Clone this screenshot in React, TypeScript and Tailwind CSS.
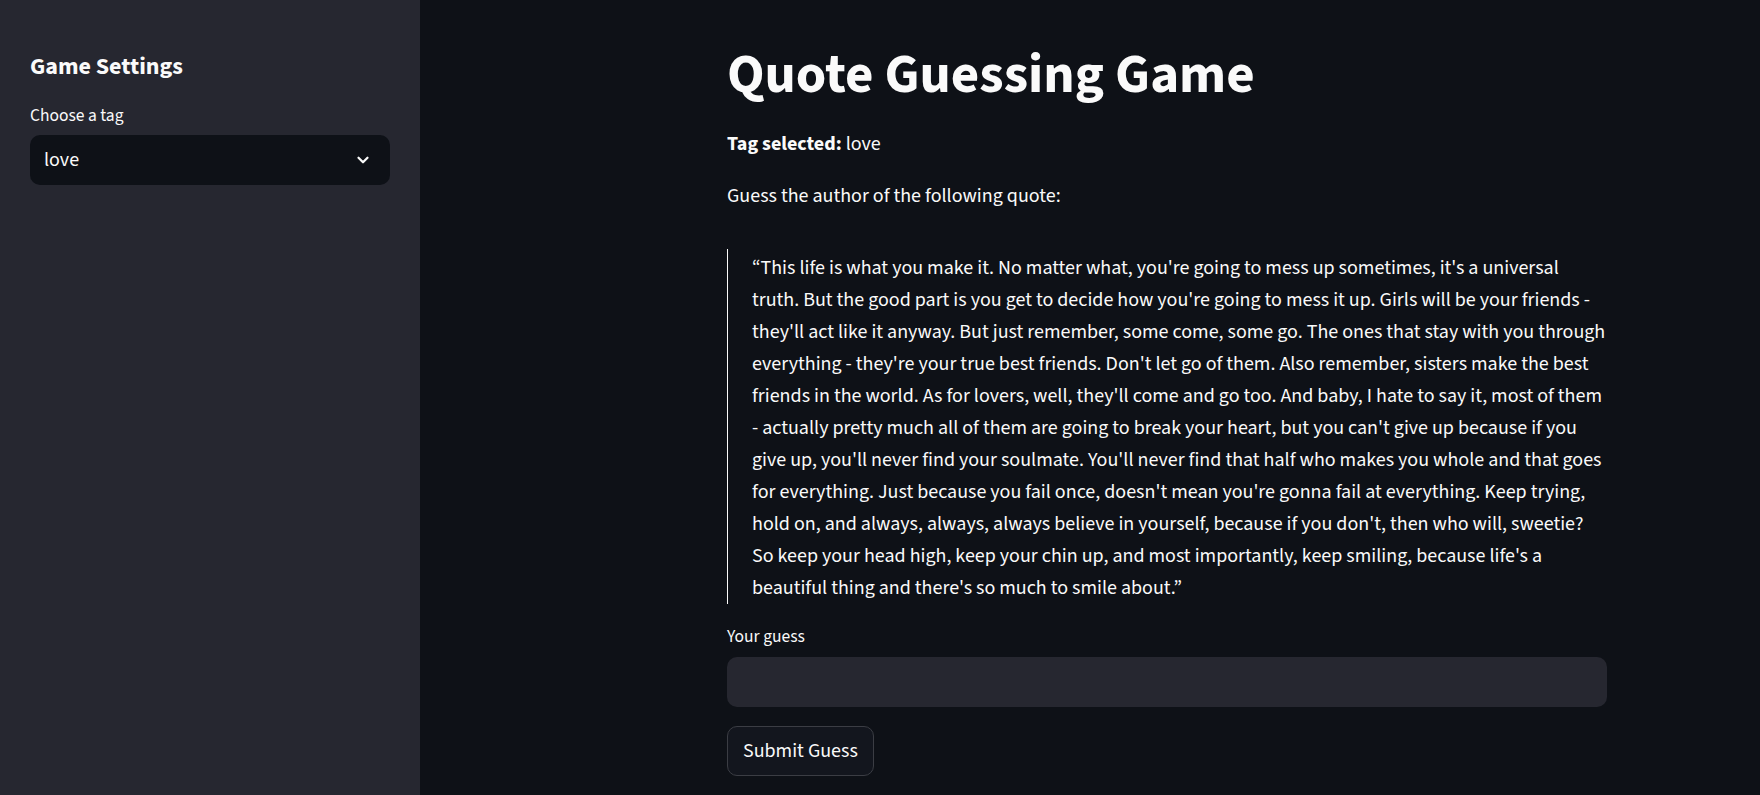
import { ChevronDown } from "lucide-react";

const font = { fontFamily: '"Source Sans Pro", "Source Sans 3", Lato, "Noto Sans", sans-serif' };

const quoteLines = [
  "“This life is what you make it. No matter what, you're going to mess up sometimes, it's a universal",
  "truth. But the good part is you get to decide how you're going to mess it up. Girls will be your friends -",
  "they'll act like it anyway. But just remember, some come, some go. The ones that stay with you through",
  "everything - they're your true best friends. Don't let go of them. Also remember, sisters make the best",
  "friends in the world. As for lovers, well, they'll come and go too. And baby, I hate to say it, most of them",
  "- actually pretty much all of them are going to break your heart, but you can't give up because if you",
  "give up, you'll never find your soulmate. You'll never find that half who makes you whole and that goes",
  "for everything. Just because you fail once, doesn't mean you're gonna fail at everything. Keep trying,",
  "hold on, and always, always, always believe in yourself, because if you don't, then who will, sweetie?",
  "So keep your head high, keep your chin up, and most importantly, keep smiling, because life's a",
  "beautiful thing and there's so much to smile about.”",
];

function Sidebar() {
  return (
    <aside className="w-[420px] shrink-0 bg-[#262730] px-[30px] pt-[52px]">
      <h2 className="text-[24px] font-bold leading-[30px] text-[#fafafa]">Game Settings</h2>
      <label className="mt-[22px] block text-[17.5px] leading-[24px] text-[#fafafa]">Choose a tag</label>
      <div className="mt-[7px] flex h-[50px] items-center justify-between rounded-[10px] bg-[#0e1117] pl-[14px] pr-[18px]">
        <span className="text-[20px] text-[#fafafa]">love</span>
        <ChevronDown className="h-[18px] w-[18px] text-[#fafafa]" strokeWidth={3} />
      </div>
    </aside>
  );
}

export default function App() {
  return (
    <div className="flex min-h-[795px] bg-[#0e1117] text-[#fafafa]" style={font}>
      <Sidebar />
      <main className="flex-1 pt-[42px]">
        <div className="ml-[307px] w-[880px]">
          <h1 className="text-[55px] font-bold leading-[66px]">Quote Guessing Game</h1>
          <p className="mt-[20px] text-[20px] leading-[32px]">
            <strong className="font-bold">Tag selected:</strong> love
          </p>
          <p className="mt-[20px] text-[20px] leading-[32px]">Guess the author of the following quote:</p>
          <blockquote className="mt-[37px] border-l border-[#fafafa] pl-[24px] pt-[3px] text-[20px] leading-[32px]">
            {quoteLines.map((line, i) => (
              <span key={i} className="block whitespace-nowrap">
                {line}
              </span>
            ))}
          </blockquote>
          <label className="mt-[21px] block text-[17.5px] leading-[24px]">Your guess</label>
          <input
            type="text"
            className="mt-[8px] block h-[50px] w-full rounded-[10px] bg-[#262730] px-[14px] text-[20px] text-[#fafafa] outline-none"
          />
          <button className="mt-[19px] h-[50px] rounded-[10px] border border-[#3b3d44] bg-[#13161e] px-[15px] text-[20px] text-[#fafafa]">
            Submit Guess
          </button>
        </div>
      </main>
    </div>
  );
}
